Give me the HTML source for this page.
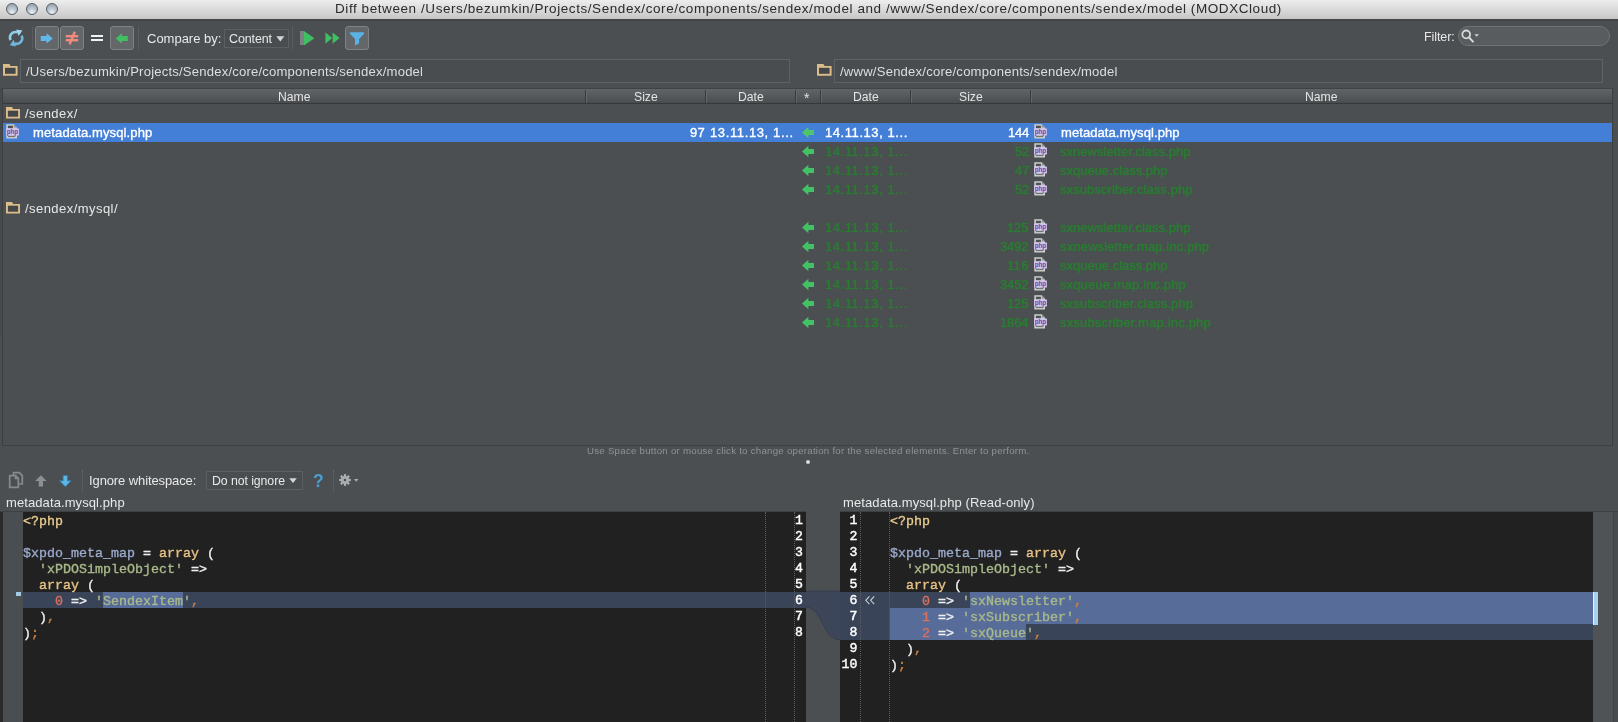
<!DOCTYPE html>
<html>
<head>
<meta charset="utf-8">
<title>Diff</title>
<style>
*{box-sizing:border-box;margin:0;padding:0}
html,body{width:1618px;height:722px;overflow:hidden;background:#4b4f51}
body{position:relative;font-family:"Liberation Sans",sans-serif;font-size:13px;color:#e4e4e4}
.abs{position:absolute}
.t{white-space:pre;line-height:20px;height:20px;will-change:transform}
#title{left:0;top:0;width:1618px;height:19px;background:linear-gradient(#ededed,#dcdcdc 45%,#c6c6c6);}
.tl{top:3px;width:12px;height:12px;border-radius:50%;background:radial-gradient(circle at 50% 85%,#eef3f7 0%,#c3cdd6 35%,#a3afba 70%,#939faa 100%);border:1.3px solid #596067}
.tbtn{width:24px;height:24px;background:#63676a;border:1px solid #7f8385;border-radius:3px}
.sepv{width:0;border-left:1px dotted #64686a}
.combo{border:1px solid #5b5f61;background:#494d4f}
.field{top:59px;height:24px;border:1px solid #5e6264;background:#494d4f}
.cs{top:90px;width:2px;height:13px;border-left:1px solid #383b3d;border-right:1px solid #64686a}
.mono{font-family:"Liberation Mono",monospace;font-size:13.333px;white-space:pre;line-height:16px;height:16px;font-weight:normal;-webkit-text-stroke-width:0.35px;will-change:transform}
svg{position:absolute;overflow:visible}
</style>
</head>
<body>

<div id="title" class="abs"></div>
<div class="abs" style="left:0;top:19px;width:1618px;height:2px;background:#414547"></div>
<div class="abs tl" style="left:6px"></div>
<div class="abs tl" style="left:26px"></div>
<div class="abs tl" style="left:46px"></div>
<div class="abs t" style="left:334.60px;top:-0.98px;font-size:13.5px;color:#2b2b2b;letter-spacing:0.573px;font-weight:normal;">Diff between /Users/bezumkin/Projects/Sendex/core/components/sendex/model and /www/Sendex/core/components/sendex/model (MODXCloud)</div>
<svg style="left:8px;top:30px" width="16" height="16" viewBox="0 0 16 16">
<path d="M2.6 10.2 A5.6 5.6 0 0 1 9.4 2.3" fill="none" stroke="#8ecbe9" stroke-width="2.5"/>
<path d="M13.6 5.6 A5.6 5.6 0 0 1 6.8 13.5" fill="none" stroke="#6fb7df" stroke-width="2.5"/>
<path d="M8.2 -0.6 L14.4 0.6 L10.6 6 Z" fill="#a6d6ee"/>
<path d="M8 16.4 L1.8 15.2 L5.6 9.8 Z" fill="#6fb7df"/>
</svg>
<div class="abs sepv" style="left:32px;top:27px;height:23px"></div>
<div class="abs tbtn" style="left:35px;top:26px"></div>
<div class="abs tbtn" style="left:60px;top:26px"></div>
<div class="abs tbtn" style="left:110px;top:26px"></div>
<div class="abs sepv" style="left:138px;top:27px;height:23px"></div>
<svg style="left:40px;top:33px" width="13" height="11" viewBox="0 0 13 11"><path d="M0.7 2.9 H6.6 V0.3 L12.8 5.4 L6.6 10.5 V7.9 H0.7 Z" fill="#60b7ea"/></svg>
<svg style="left:65px;top:31px" width="14" height="14" viewBox="0 0 14 14"><rect x="0.8" y="4" width="12.4" height="2.4" fill="#f28b7d"/><rect x="0.8" y="8" width="12.4" height="2.4" fill="#f28b7d"/><path d="M9.8 0.8 L4.6 13.4" stroke="#f28b7d" stroke-width="2.4" fill="none"/></svg>
<div class="abs" style="left:91px;top:35px;width:12px;height:2px;background:#f2f2f2"></div>
<div class="abs" style="left:91px;top:39px;width:12px;height:2px;background:#f2f2f2"></div>
<svg style="left:115px;top:32.5px" width="13" height="11" viewBox="0 0 13 11"><path d="M12.8 2.9 H6.9 V0.3 L0.6 5.4 L6.9 10.5 V7.9 H12.8 Z" fill="#3fbf62"/></svg>
<div class="abs t" style="left:146.70px;top:28.90px;font-size:13px;color:#e8e8e8;letter-spacing:-0.012px;font-weight:normal;">Compare by:</div>
<div class="abs combo" style="left:224px;top:29px;width:65px;height:19px"></div>
<div class="abs t" style="left:228.70px;top:29.07px;font-size:12.5px;color:#e8e8e8;letter-spacing:-0.130px;font-weight:normal;">Content</div>
<svg style="left:275.5px;top:36px" width="9" height="6" viewBox="0 0 9 6"><path d="M0.3 0.3 H8.3 L4.3 5.4 Z" fill="#d6d6d6"/></svg>
<div class="abs sepv" style="left:292px;top:27px;height:23px"></div>
<div class="abs" style="left:300px;top:31px;width:4px;height:14px;background:#7c8082"></div>
<svg style="left:304px;top:31px" width="11" height="15" viewBox="0 0 11 15"><path d="M0 0 L10.4 7.2 L0 14.4 Z" fill="#3fbf62"/></svg>
<svg style="left:325px;top:32px" width="15" height="12" viewBox="0 0 15 12"><path d="M0.4 0.5 L7.2 6.1 L0.4 11.7 Z M7.6 0.5 L14.6 6.1 L7.6 11.7 Z" fill="#3fbf62"/></svg>
<div class="abs tbtn" style="left:345px;top:26px"></div>
<svg style="left:350px;top:32px" width="14" height="14" viewBox="0 0 14 14"><path d="M0 0.2 H14 V1.8 L9.1 7 V11.2 L5 13.6 V7 L0 1.8 Z" fill="#5ab3e6"/></svg>
<div class="abs t" style="left:1423.50px;top:27.17px;font-size:12.5px;color:#e8e8e8;letter-spacing:-0.075px;font-weight:normal;">Filter:</div>
<div class="abs" style="left:1458px;top:26px;width:152px;height:20px;border-radius:10px;border:1px solid #6f7375;background:#585c5e"></div>
<svg style="left:1461px;top:29px" width="19" height="14" viewBox="0 0 19 14"><circle cx="5.2" cy="5.4" r="3.9" fill="none" stroke="#d9d9d9" stroke-width="1.8"/><path d="M7.9 8.3 L12 12.6" stroke="#d9d9d9" stroke-width="2" stroke-linecap="round"/><path d="M13.4 5.2 H18 L15.7 7.8 Z" fill="#d0d0d0"/></svg>
<svg style="left:2.7px;top:64.3px" width="15" height="12" viewBox="0 0 15 12"><path d="M0 0 H6.4 L7.6 2 H14.6 V11.8 H0 Z" fill="#dcbd8a"/><rect x="2" y="3.8" width="10.6" height="6" fill="#43474a"/></svg>
<div class="abs field" style="left:19.5px;width:770px"></div>
<div class="abs t" style="left:26.00px;top:61.76px;font-size:13.1px;color:#dedede;letter-spacing:0.191px;font-weight:normal;">/Users/bezumkin/Projects/Sendex/core/components/sendex/model</div>
<svg style="left:816.5px;top:64.3px" width="15" height="12" viewBox="0 0 15 12"><path d="M0 0 H6.4 L7.6 2 H14.6 V11.8 H0 Z" fill="#dcbd8a"/><rect x="2" y="3.8" width="10.6" height="6" fill="#43474a"/></svg>
<div class="abs field" style="left:833.5px;width:769px"></div>
<div class="abs t" style="left:839.70px;top:61.76px;font-size:13.1px;color:#dedede;letter-spacing:0.210px;font-weight:normal;">/www/Sendex/core/components/sendex/model</div>
<div class="abs" style="left:0;top:88px;width:2px;height:247px;background:#464a4c"></div>
<div class="abs" style="left:2px;top:88px;width:1px;height:358px;background:#3c3f41"></div>
<div class="abs" style="left:1612px;top:88px;width:1px;height:358px;background:#3c3f41"></div>
<div class="abs" style="left:3px;top:88px;width:1609px;height:16px;background:linear-gradient(#606466,#55595b 50%,#494d4f);border-top:1px solid #404345;border-bottom:1px solid #36393b"></div>
<div class="abs cs" style="left:584.5px"></div>
<div class="abs cs" style="left:704.5px"></div>
<div class="abs cs" style="left:795.0px"></div>
<div class="abs cs" style="left:819.5px"></div>
<div class="abs cs" style="left:909.5px"></div>
<div class="abs cs" style="left:1029.5px"></div>
<div class="abs t" style="left:277.74px;top:86.97px;font-size:12.2px;color:#e4e4e4;letter-spacing:0.000px;font-weight:normal;">Name</div>
<div class="abs t" style="left:634.14px;top:86.97px;font-size:12.2px;color:#e4e4e4;letter-spacing:0.000px;font-weight:normal;">Size</div>
<div class="abs t" style="left:738.12px;top:86.97px;font-size:12.2px;color:#e4e4e4;letter-spacing:0.000px;font-weight:normal;">Date</div>
<div class="abs t" style="left:853.12px;top:86.97px;font-size:12.2px;color:#e4e4e4;letter-spacing:0.000px;font-weight:normal;">Date</div>
<div class="abs t" style="left:959.14px;top:86.97px;font-size:12.2px;color:#e4e4e4;letter-spacing:0.000px;font-weight:normal;">Size</div>
<div class="abs t" style="left:1305.24px;top:86.97px;font-size:12.2px;color:#e4e4e4;letter-spacing:0.000px;font-weight:normal;">Name</div>
<div class="abs t" style="left:804.30px;top:88.35px;font-size:14px;color:#e2e2e2;letter-spacing:0.000px;font-weight:normal;">*</div>
<div class="abs" style="left:3px;top:123px;width:1609px;height:19px;background:#437fd6"></div>
<svg style="left:6px;top:107px" width="14" height="12" viewBox="0 0 14 12"><path d="M0 0 H6 L7.2 2 H14 V11.6 H0 Z" fill="#dcbd8a"/><rect x="1.9" y="3.7" width="10.2" height="6" fill="#43474a"/></svg>
<div class="abs t" style="left:25.00px;top:103.60px;font-size:13px;color:#e8e8e8;letter-spacing:0.449px;font-weight:normal;">/sendex/</div>
<svg style="left:6px;top:202px" width="14" height="12" viewBox="0 0 14 12"><path d="M0 0 H6 L7.2 2 H14 V11.6 H0 Z" fill="#dcbd8a"/><rect x="1.9" y="3.7" width="10.2" height="6" fill="#43474a"/></svg>
<div class="abs t" style="left:25.00px;top:198.60px;font-size:13px;color:#e8e8e8;letter-spacing:0.446px;font-weight:normal;">/sendex/mysql/</div>
<svg style="left:6px;top:124px" width="13" height="15" viewBox="0 0 13 15"><path d="M0.3 0.2 H7.8 L11 3.4 V14.6 H0.3 Z" fill="#cfcfcf"/><rect x="1.9" y="1.7" width="5" height="2.6" fill="#4e5254"/><path d="M7.8 0.2 L11 3.4 H7.8 Z" fill="#8f9294"/><rect x="1.9" y="11.6" width="7.4" height="1.5" fill="#707476"/><rect x="0" y="4.5" width="12.9" height="7" fill="#d3c6ee"/><text x="6.45" y="10" font-family="Liberation Sans" font-size="7.6" font-weight="bold" fill="#6b47a8" text-anchor="middle" textLength="11.6" lengthAdjust="spacingAndGlyphs">php</text></svg>
<div class="abs t" style="left:32.70px;top:122.60px;font-size:13px;color:#ffffff;letter-spacing:0.131px;font-weight:normal;-webkit-text-stroke:0.35px #fff;">metadata.mysql.php</div>
<div class="abs t" style="left:689.70px;top:122.60px;font-size:13px;color:#ffffff;letter-spacing:0.331px;font-weight:normal;-webkit-text-stroke:0.35px #fff;">97</div>
<div class="abs t" style="left:710.00px;top:122.60px;font-size:13px;color:#ffffff;letter-spacing:0.620px;font-weight:normal;-webkit-text-stroke:0.35px #fff;">13.11.13, 1...</div>
<svg style="left:802.1px;top:126.5px" width="12" height="11" viewBox="0 0 12 11"><path d="M12 2.9 H6.4 V-0.3 L0 5.5 L6.4 11.3 V8.1 H12 Z" fill="#4cc56c"/></svg>
<div class="abs t" style="left:824.90px;top:122.60px;font-size:13px;color:#ffffff;letter-spacing:0.566px;font-weight:normal;-webkit-text-stroke:0.35px #fff;">14.11.13, 1...</div>
<div class="abs t" style="left:1007.60px;top:122.60px;font-size:13px;color:#ffffff;letter-spacing:-0.252px;font-weight:normal;-webkit-text-stroke:0.35px #fff;">144</div>
<svg style="left:1034px;top:124px" width="13" height="15" viewBox="0 0 13 15"><path d="M0.3 0.2 H7.8 L11 3.4 V14.6 H0.3 Z" fill="#cfcfcf"/><rect x="1.9" y="1.7" width="5" height="2.6" fill="#4e5254"/><path d="M7.8 0.2 L11 3.4 H7.8 Z" fill="#8f9294"/><rect x="1.9" y="11.6" width="7.4" height="1.5" fill="#707476"/><rect x="0" y="4.5" width="12.9" height="7" fill="#d3c6ee"/><text x="6.45" y="10" font-family="Liberation Sans" font-size="7.6" font-weight="bold" fill="#6b47a8" text-anchor="middle" textLength="11.6" lengthAdjust="spacingAndGlyphs">php</text></svg>
<div class="abs t" style="left:1060.70px;top:122.60px;font-size:13px;color:#ffffff;letter-spacing:0.084px;font-weight:normal;-webkit-text-stroke:0.35px #fff;">metadata.mysql.php</div>
<svg style="left:802.1px;top:145.5px" width="12" height="11" viewBox="0 0 12 11"><path d="M12 2.9 H6.4 V-0.3 L0 5.5 L6.4 11.3 V8.1 H12 Z" fill="#43c165"/></svg>
<div class="abs t" style="left:824.90px;top:141.60px;font-size:13px;color:#2b7c33;letter-spacing:0.566px;font-weight:normal;text-shadow:0 0 1.2px #2a7d33;-webkit-text-stroke:0.2px #2a7d33;">14.11.13, 1...</div>
<div class="abs t" style="left:1014.50px;top:141.60px;font-size:13px;color:#2b7c33;letter-spacing:-0.169px;font-weight:normal;text-shadow:0 0 1.2px #2a7d33;-webkit-text-stroke:0.2px #2a7d33;">52</div>
<svg style="left:1034px;top:143px" width="13" height="15" viewBox="0 0 13 15"><path d="M0.3 0.2 H7.8 L11 3.4 V14.6 H0.3 Z" fill="#cfcfcf"/><rect x="1.9" y="1.7" width="5" height="2.6" fill="#4e5254"/><path d="M7.8 0.2 L11 3.4 H7.8 Z" fill="#8f9294"/><rect x="1.9" y="11.6" width="7.4" height="1.5" fill="#707476"/><rect x="0" y="4.5" width="12.9" height="7" fill="#d3c6ee"/><text x="6.45" y="10" font-family="Liberation Sans" font-size="7.6" font-weight="bold" fill="#6b47a8" text-anchor="middle" textLength="11.6" lengthAdjust="spacingAndGlyphs">php</text></svg>
<div class="abs t" style="left:1059.50px;top:141.60px;font-size:13px;color:#2b7c33;letter-spacing:0.020px;font-weight:normal;text-shadow:0 0 1.2px #2a7d33;-webkit-text-stroke:0.2px #2a7d33;">sxnewsletter.class.php</div>
<svg style="left:802.1px;top:164.5px" width="12" height="11" viewBox="0 0 12 11"><path d="M12 2.9 H6.4 V-0.3 L0 5.5 L6.4 11.3 V8.1 H12 Z" fill="#43c165"/></svg>
<div class="abs t" style="left:824.90px;top:160.60px;font-size:13px;color:#2b7c33;letter-spacing:0.566px;font-weight:normal;text-shadow:0 0 1.2px #2a7d33;-webkit-text-stroke:0.2px #2a7d33;">14.11.13, 1...</div>
<div class="abs t" style="left:1014.50px;top:160.60px;font-size:13px;color:#2b7c33;letter-spacing:-0.169px;font-weight:normal;text-shadow:0 0 1.2px #2a7d33;-webkit-text-stroke:0.2px #2a7d33;">47</div>
<svg style="left:1034px;top:162px" width="13" height="15" viewBox="0 0 13 15"><path d="M0.3 0.2 H7.8 L11 3.4 V14.6 H0.3 Z" fill="#cfcfcf"/><rect x="1.9" y="1.7" width="5" height="2.6" fill="#4e5254"/><path d="M7.8 0.2 L11 3.4 H7.8 Z" fill="#8f9294"/><rect x="1.9" y="11.6" width="7.4" height="1.5" fill="#707476"/><rect x="0" y="4.5" width="12.9" height="7" fill="#d3c6ee"/><text x="6.45" y="10" font-family="Liberation Sans" font-size="7.6" font-weight="bold" fill="#6b47a8" text-anchor="middle" textLength="11.6" lengthAdjust="spacingAndGlyphs">php</text></svg>
<div class="abs t" style="left:1059.50px;top:160.60px;font-size:13px;color:#2b7c33;letter-spacing:-0.012px;font-weight:normal;text-shadow:0 0 1.2px #2a7d33;-webkit-text-stroke:0.2px #2a7d33;">sxqueue.class.php</div>
<svg style="left:802.1px;top:183.5px" width="12" height="11" viewBox="0 0 12 11"><path d="M12 2.9 H6.4 V-0.3 L0 5.5 L6.4 11.3 V8.1 H12 Z" fill="#43c165"/></svg>
<div class="abs t" style="left:824.90px;top:179.60px;font-size:13px;color:#2b7c33;letter-spacing:0.566px;font-weight:normal;text-shadow:0 0 1.2px #2a7d33;-webkit-text-stroke:0.2px #2a7d33;">14.11.13, 1...</div>
<div class="abs t" style="left:1014.50px;top:179.60px;font-size:13px;color:#2b7c33;letter-spacing:-0.169px;font-weight:normal;text-shadow:0 0 1.2px #2a7d33;-webkit-text-stroke:0.2px #2a7d33;">52</div>
<svg style="left:1034px;top:181px" width="13" height="15" viewBox="0 0 13 15"><path d="M0.3 0.2 H7.8 L11 3.4 V14.6 H0.3 Z" fill="#cfcfcf"/><rect x="1.9" y="1.7" width="5" height="2.6" fill="#4e5254"/><path d="M7.8 0.2 L11 3.4 H7.8 Z" fill="#8f9294"/><rect x="1.9" y="11.6" width="7.4" height="1.5" fill="#707476"/><rect x="0" y="4.5" width="12.9" height="7" fill="#d3c6ee"/><text x="6.45" y="10" font-family="Liberation Sans" font-size="7.6" font-weight="bold" fill="#6b47a8" text-anchor="middle" textLength="11.6" lengthAdjust="spacingAndGlyphs">php</text></svg>
<div class="abs t" style="left:1059.50px;top:179.60px;font-size:13px;color:#2b7c33;letter-spacing:0.082px;font-weight:normal;text-shadow:0 0 1.2px #2a7d33;-webkit-text-stroke:0.2px #2a7d33;">sxsubscriber.class.php</div>
<svg style="left:802.1px;top:221.5px" width="12" height="11" viewBox="0 0 12 11"><path d="M12 2.9 H6.4 V-0.3 L0 5.5 L6.4 11.3 V8.1 H12 Z" fill="#43c165"/></svg>
<div class="abs t" style="left:824.90px;top:217.60px;font-size:13px;color:#2b7c33;letter-spacing:0.566px;font-weight:normal;text-shadow:0 0 1.2px #2a7d33;-webkit-text-stroke:0.2px #2a7d33;">14.11.13, 1...</div>
<div class="abs t" style="left:1007.35px;top:217.60px;font-size:13px;color:#2b7c33;letter-spacing:-0.127px;font-weight:normal;text-shadow:0 0 1.2px #2a7d33;-webkit-text-stroke:0.2px #2a7d33;">125</div>
<svg style="left:1034px;top:219px" width="13" height="15" viewBox="0 0 13 15"><path d="M0.3 0.2 H7.8 L11 3.4 V14.6 H0.3 Z" fill="#cfcfcf"/><rect x="1.9" y="1.7" width="5" height="2.6" fill="#4e5254"/><path d="M7.8 0.2 L11 3.4 H7.8 Z" fill="#8f9294"/><rect x="1.9" y="11.6" width="7.4" height="1.5" fill="#707476"/><rect x="0" y="4.5" width="12.9" height="7" fill="#d3c6ee"/><text x="6.45" y="10" font-family="Liberation Sans" font-size="7.6" font-weight="bold" fill="#6b47a8" text-anchor="middle" textLength="11.6" lengthAdjust="spacingAndGlyphs">php</text></svg>
<div class="abs t" style="left:1059.50px;top:217.60px;font-size:13px;color:#2b7c33;letter-spacing:0.020px;font-weight:normal;text-shadow:0 0 1.2px #2a7d33;-webkit-text-stroke:0.2px #2a7d33;">sxnewsletter.class.php</div>
<svg style="left:802.1px;top:240.5px" width="12" height="11" viewBox="0 0 12 11"><path d="M12 2.9 H6.4 V-0.3 L0 5.5 L6.4 11.3 V8.1 H12 Z" fill="#43c165"/></svg>
<div class="abs t" style="left:824.90px;top:236.60px;font-size:13px;color:#2b7c33;letter-spacing:0.566px;font-weight:normal;text-shadow:0 0 1.2px #2a7d33;-webkit-text-stroke:0.2px #2a7d33;">14.11.13, 1...</div>
<div class="abs t" style="left:1000.20px;top:236.60px;font-size:13px;color:#2b7c33;letter-spacing:-0.107px;font-weight:normal;text-shadow:0 0 1.2px #2a7d33;-webkit-text-stroke:0.2px #2a7d33;">3492</div>
<svg style="left:1034px;top:238px" width="13" height="15" viewBox="0 0 13 15"><path d="M0.3 0.2 H7.8 L11 3.4 V14.6 H0.3 Z" fill="#cfcfcf"/><rect x="1.9" y="1.7" width="5" height="2.6" fill="#4e5254"/><path d="M7.8 0.2 L11 3.4 H7.8 Z" fill="#8f9294"/><rect x="1.9" y="11.6" width="7.4" height="1.5" fill="#707476"/><rect x="0" y="4.5" width="12.9" height="7" fill="#d3c6ee"/><text x="6.45" y="10" font-family="Liberation Sans" font-size="7.6" font-weight="bold" fill="#6b47a8" text-anchor="middle" textLength="11.6" lengthAdjust="spacingAndGlyphs">php</text></svg>
<div class="abs t" style="left:1059.50px;top:236.60px;font-size:13px;color:#2b7c33;letter-spacing:0.136px;font-weight:normal;text-shadow:0 0 1.2px #2a7d33;-webkit-text-stroke:0.2px #2a7d33;">sxnewsletter.map.inc.php</div>
<svg style="left:802.1px;top:259.5px" width="12" height="11" viewBox="0 0 12 11"><path d="M12 2.9 H6.4 V-0.3 L0 5.5 L6.4 11.3 V8.1 H12 Z" fill="#43c165"/></svg>
<div class="abs t" style="left:824.90px;top:255.60px;font-size:13px;color:#2b7c33;letter-spacing:0.566px;font-weight:normal;text-shadow:0 0 1.2px #2a7d33;-webkit-text-stroke:0.2px #2a7d33;">14.11.13, 1...</div>
<div class="abs t" style="left:1007.35px;top:255.60px;font-size:13px;color:#2b7c33;letter-spacing:0.358px;font-weight:normal;text-shadow:0 0 1.2px #2a7d33;-webkit-text-stroke:0.2px #2a7d33;">116</div>
<svg style="left:1034px;top:257px" width="13" height="15" viewBox="0 0 13 15"><path d="M0.3 0.2 H7.8 L11 3.4 V14.6 H0.3 Z" fill="#cfcfcf"/><rect x="1.9" y="1.7" width="5" height="2.6" fill="#4e5254"/><path d="M7.8 0.2 L11 3.4 H7.8 Z" fill="#8f9294"/><rect x="1.9" y="11.6" width="7.4" height="1.5" fill="#707476"/><rect x="0" y="4.5" width="12.9" height="7" fill="#d3c6ee"/><text x="6.45" y="10" font-family="Liberation Sans" font-size="7.6" font-weight="bold" fill="#6b47a8" text-anchor="middle" textLength="11.6" lengthAdjust="spacingAndGlyphs">php</text></svg>
<div class="abs t" style="left:1059.50px;top:255.60px;font-size:13px;color:#2b7c33;letter-spacing:-0.012px;font-weight:normal;text-shadow:0 0 1.2px #2a7d33;-webkit-text-stroke:0.2px #2a7d33;">sxqueue.class.php</div>
<svg style="left:802.1px;top:278.5px" width="12" height="11" viewBox="0 0 12 11"><path d="M12 2.9 H6.4 V-0.3 L0 5.5 L6.4 11.3 V8.1 H12 Z" fill="#43c165"/></svg>
<div class="abs t" style="left:824.90px;top:274.60px;font-size:13px;color:#2b7c33;letter-spacing:0.566px;font-weight:normal;text-shadow:0 0 1.2px #2a7d33;-webkit-text-stroke:0.2px #2a7d33;">14.11.13, 1...</div>
<div class="abs t" style="left:1000.20px;top:274.60px;font-size:13px;color:#2b7c33;letter-spacing:-0.107px;font-weight:normal;text-shadow:0 0 1.2px #2a7d33;-webkit-text-stroke:0.2px #2a7d33;">3452</div>
<svg style="left:1034px;top:276px" width="13" height="15" viewBox="0 0 13 15"><path d="M0.3 0.2 H7.8 L11 3.4 V14.6 H0.3 Z" fill="#cfcfcf"/><rect x="1.9" y="1.7" width="5" height="2.6" fill="#4e5254"/><path d="M7.8 0.2 L11 3.4 H7.8 Z" fill="#8f9294"/><rect x="1.9" y="11.6" width="7.4" height="1.5" fill="#707476"/><rect x="0" y="4.5" width="12.9" height="7" fill="#d3c6ee"/><text x="6.45" y="10" font-family="Liberation Sans" font-size="7.6" font-weight="bold" fill="#6b47a8" text-anchor="middle" textLength="11.6" lengthAdjust="spacingAndGlyphs">php</text></svg>
<div class="abs t" style="left:1059.50px;top:274.60px;font-size:13px;color:#2b7c33;letter-spacing:0.123px;font-weight:normal;text-shadow:0 0 1.2px #2a7d33;-webkit-text-stroke:0.2px #2a7d33;">sxqueue.map.inc.php</div>
<svg style="left:802.1px;top:297.5px" width="12" height="11" viewBox="0 0 12 11"><path d="M12 2.9 H6.4 V-0.3 L0 5.5 L6.4 11.3 V8.1 H12 Z" fill="#43c165"/></svg>
<div class="abs t" style="left:824.90px;top:293.60px;font-size:13px;color:#2b7c33;letter-spacing:0.566px;font-weight:normal;text-shadow:0 0 1.2px #2a7d33;-webkit-text-stroke:0.2px #2a7d33;">14.11.13, 1...</div>
<div class="abs t" style="left:1007.35px;top:293.60px;font-size:13px;color:#2b7c33;letter-spacing:-0.127px;font-weight:normal;text-shadow:0 0 1.2px #2a7d33;-webkit-text-stroke:0.2px #2a7d33;">125</div>
<svg style="left:1034px;top:295px" width="13" height="15" viewBox="0 0 13 15"><path d="M0.3 0.2 H7.8 L11 3.4 V14.6 H0.3 Z" fill="#cfcfcf"/><rect x="1.9" y="1.7" width="5" height="2.6" fill="#4e5254"/><path d="M7.8 0.2 L11 3.4 H7.8 Z" fill="#8f9294"/><rect x="1.9" y="11.6" width="7.4" height="1.5" fill="#707476"/><rect x="0" y="4.5" width="12.9" height="7" fill="#d3c6ee"/><text x="6.45" y="10" font-family="Liberation Sans" font-size="7.6" font-weight="bold" fill="#6b47a8" text-anchor="middle" textLength="11.6" lengthAdjust="spacingAndGlyphs">php</text></svg>
<div class="abs t" style="left:1059.50px;top:293.60px;font-size:13px;color:#2b7c33;letter-spacing:0.101px;font-weight:normal;text-shadow:0 0 1.2px #2a7d33;-webkit-text-stroke:0.2px #2a7d33;">sxsubscriber.class.php</div>
<svg style="left:802.1px;top:316.5px" width="12" height="11" viewBox="0 0 12 11"><path d="M12 2.9 H6.4 V-0.3 L0 5.5 L6.4 11.3 V8.1 H12 Z" fill="#43c165"/></svg>
<div class="abs t" style="left:824.90px;top:312.60px;font-size:13px;color:#2b7c33;letter-spacing:0.566px;font-weight:normal;text-shadow:0 0 1.2px #2a7d33;-webkit-text-stroke:0.2px #2a7d33;">14.11.13, 1...</div>
<div class="abs t" style="left:1000.20px;top:312.60px;font-size:13px;color:#2b7c33;letter-spacing:-0.107px;font-weight:normal;text-shadow:0 0 1.2px #2a7d33;-webkit-text-stroke:0.2px #2a7d33;">1864</div>
<svg style="left:1034px;top:314px" width="13" height="15" viewBox="0 0 13 15"><path d="M0.3 0.2 H7.8 L11 3.4 V14.6 H0.3 Z" fill="#cfcfcf"/><rect x="1.9" y="1.7" width="5" height="2.6" fill="#4e5254"/><path d="M7.8 0.2 L11 3.4 H7.8 Z" fill="#8f9294"/><rect x="1.9" y="11.6" width="7.4" height="1.5" fill="#707476"/><rect x="0" y="4.5" width="12.9" height="7" fill="#d3c6ee"/><text x="6.45" y="10" font-family="Liberation Sans" font-size="7.6" font-weight="bold" fill="#6b47a8" text-anchor="middle" textLength="11.6" lengthAdjust="spacingAndGlyphs">php</text></svg>
<div class="abs t" style="left:1059.50px;top:312.60px;font-size:13px;color:#2b7c33;letter-spacing:0.174px;font-weight:normal;text-shadow:0 0 1.2px #2a7d33;-webkit-text-stroke:0.2px #2a7d33;">sxsubscriber.map.inc.php</div>
<div class="abs" style="left:3px;top:445px;width:1610px;height:1px;background:#3e4143"></div>
<div class="abs t" style="left:586.90px;top:441.14px;font-size:9.7px;color:#8f9395;letter-spacing:0.246px;font-weight:normal;">Use Space button or mouse click to change operation for the selected elements. Enter to perform.</div>
<div class="abs" style="left:806px;top:459.7px;width:4px;height:4px;border-radius:2px;background:#dadada"></div>
<svg style="left:9px;top:472px" width="14" height="16" viewBox="0 0 14 16">
<path d="M4.6 3 V0.7 H10.4 L13.3 3.6 V12 H9.4" fill="none" stroke="#878b8d" stroke-width="1.7"/>
<path d="M0.7 3.6 H6.6 L9.3 6.4 V15.3 H0.7 Z" fill="none" stroke="#878b8d" stroke-width="1.7"/>
<path d="M6.4 3.6 V6.6 H9.3" fill="none" stroke="#878b8d" stroke-width="1.3"/>
</svg>
<svg style="left:35px;top:474.5px" width="12" height="12" viewBox="0 0 12 12"><path d="M5.9 0.2 L11.6 6 H8 V11.4 H3.8 V6 H0.2 Z" fill="#8d9193"/></svg>
<svg style="left:59px;top:474.5px" width="13" height="12" viewBox="0 0 13 12"><path d="M6.3 11.7 L12.2 5.8 H8.5 V0.4 H4.1 V5.8 H0.4 Z" fill="#5ab6e6" stroke="#2f78a6" stroke-width="0.7"/></svg>
<div class="abs sepv" style="left:82px;top:470px;height:22px"></div>
<div class="abs t" style="left:89.20px;top:470.60px;font-size:13px;color:#e8e8e8;letter-spacing:-0.107px;font-weight:normal;">Ignore whitespace:</div>
<div class="abs combo" style="left:206px;top:471px;width:97px;height:19px"></div>
<div class="abs t" style="left:211.60px;top:471.34px;font-size:12.3px;color:#e8e8e8;letter-spacing:-0.070px;font-weight:normal;">Do not ignore</div>
<svg style="left:289.3px;top:478px" width="8" height="6" viewBox="0 0 8 6"><path d="M0.2 0.2 H7.8 L4 5 Z" fill="#d6d6d6"/></svg>
<div class="abs t" style="left:312.80px;top:471.24px;font-size:17.5px;color:#4b9dd3;letter-spacing:0.000px;font-weight:bold;">?</div>
<div class="abs sepv" style="left:333px;top:470px;height:22px"></div>
<svg style="left:339px;top:474px" width="12" height="12" viewBox="-6 -6 12 12"><rect x="-1.1" y="-5.9" width="2.2" height="3" fill="#a9adaf" transform="rotate(0)"/><rect x="-1.1" y="-5.9" width="2.2" height="3" fill="#a9adaf" transform="rotate(45)"/><rect x="-1.1" y="-5.9" width="2.2" height="3" fill="#a9adaf" transform="rotate(90)"/><rect x="-1.1" y="-5.9" width="2.2" height="3" fill="#a9adaf" transform="rotate(135)"/><rect x="-1.1" y="-5.9" width="2.2" height="3" fill="#a9adaf" transform="rotate(180)"/><rect x="-1.1" y="-5.9" width="2.2" height="3" fill="#a9adaf" transform="rotate(225)"/><rect x="-1.1" y="-5.9" width="2.2" height="3" fill="#a9adaf" transform="rotate(270)"/><rect x="-1.1" y="-5.9" width="2.2" height="3" fill="#a9adaf" transform="rotate(315)"/><circle r="2.7" fill="none" stroke="#a9adaf" stroke-width="2.8"/></svg>
<svg style="left:353.5px;top:478.6px" width="5" height="3" viewBox="0 0 5 3"><path d="M0 0 H4.4 L2.2 2.8 Z" fill="#a9adaf"/></svg>
<div class="abs t" style="left:6.40px;top:493.10px;font-size:13px;color:#e8e8e8;letter-spacing:0.095px;font-weight:normal;">metadata.mysql.php</div>
<div class="abs t" style="left:842.50px;top:493.10px;font-size:13px;color:#e8e8e8;letter-spacing:0.100px;font-weight:normal;">metadata.mysql.php (Read-only)</div>
<div class="abs" style="left:0;top:512px;width:3px;height:210px;background:#2b2b2b"></div>
<div class="abs" style="left:3px;top:512px;width:20px;height:210px;background:#4a4e50"></div>
<div class="abs" style="left:23px;top:512px;width:783px;height:210px;background:#212121"></div>
<div class="abs" style="left:840px;top:512px;width:753px;height:210px;background:#212121"></div>
<div class="abs" style="left:1593px;top:512px;width:20px;height:210px;background:#4f5355"></div>
<div class="abs" style="left:1613px;top:512px;width:5px;height:210px;background:#484c4e;border-left:1px solid #414446"></div>
<div class="abs" style="left:0;top:511px;width:1618px;height:1px;background:#3e4143"></div>
<div class="abs" style="left:806px;top:511px;width:34px;height:1px;background:#4b4f51"></div>
<div class="abs" style="left:23px;top:592px;width:783px;height:16px;background:#3a4458"></div>
<div class="abs" style="left:103px;top:592px;width:80px;height:16px;background:#586c99"></div>
<svg style="left:806px;top:591px" width="34" height="49" viewBox="0 0 34 49"><path d="M0 0 H34 V49 C16 49 17 16.5 0 16.5 Z" fill="#3d4559"/><path d="M0 0.3 H34 M34 48.6 C16 48.6 17 16.2 0 16.2" fill="none" stroke="#343c4f" stroke-width="0.9"/></svg>
<div class="abs" style="left:840px;top:592px;width:753px;height:48px;background:#3a4458"></div>
<div class="abs" style="left:970px;top:592px;width:623px;height:16px;background:#586c99"></div>
<div class="abs" style="left:890px;top:608px;width:703px;height:16px;background:#586c99"></div>
<div class="abs" style="left:890px;top:624px;width:136px;height:16px;background:#586c99"></div>
<div class="abs" style="left:1593px;top:592px;width:5px;height:33px;background:#a9d2f2;border-left:1px solid #e8f2fb"></div>
<div class="abs" style="left:15.5px;top:592px;width:5.5px;height:4px;background:#a4c9e4"></div>
<div class="abs" style="left:765px;top:512px;width:0;height:210px;border-left:1px dotted #5e5e5e"></div>
<div class="abs" style="left:794px;top:512px;width:0;height:210px;border-left:1px dotted #5e5e5e"></div>
<div class="abs" style="left:860px;top:512px;width:0;height:210px;border-left:1px dotted #5e5e5e"></div>
<div class="abs" style="left:889px;top:512px;width:0;height:210px;border-left:1px dotted #5e5e5e"></div>
<div class="abs mono" style="left:23px;top:513.8px"><span style="color:#e8c98e">&lt;?php</span></div>
<div class="abs mono" style="left:23px;top:545.8px"><span style="color:#9aa8c9">$xpdo_meta_map</span><span style="color:#efefef"> = </span><span style="color:#e8c286">array</span><span style="color:#efefef"> (</span></div>
<div class="abs mono" style="left:23px;top:561.8px"><span style="color:#a9b98a">  &#x27;xPDOSimpleObject&#x27;</span><span style="color:#efefef"> =&gt;</span></div>
<div class="abs mono" style="left:23px;top:577.8px"><span style="color:#e8c286">  array</span><span style="color:#efefef"> (</span></div>
<div class="abs mono" style="left:23px;top:593.8px"><span style="color:#d9705f">    0</span><span style="color:#efefef"> =&gt; </span><span style="color:#a9b98a">&#x27;SendexItem&#x27;</span><span style="color:#cc8242">,</span></div>
<div class="abs mono" style="left:23px;top:609.8px"><span style="color:#efefef">  )</span><span style="color:#cc8242">,</span></div>
<div class="abs mono" style="left:23px;top:625.8px"><span style="color:#efefef">)</span><span style="color:#cc8242">;</span></div>
<div class="abs mono" style="left:890px;top:513.8px"><span style="color:#e8c98e">&lt;?php</span></div>
<div class="abs mono" style="left:890px;top:545.8px"><span style="color:#9aa8c9">$xpdo_meta_map</span><span style="color:#efefef"> = </span><span style="color:#e8c286">array</span><span style="color:#efefef"> (</span></div>
<div class="abs mono" style="left:890px;top:561.8px"><span style="color:#a9b98a">  &#x27;xPDOSimpleObject&#x27;</span><span style="color:#efefef"> =&gt;</span></div>
<div class="abs mono" style="left:890px;top:577.8px"><span style="color:#e8c286">  array</span><span style="color:#efefef"> (</span></div>
<div class="abs mono" style="left:890px;top:593.8px"><span style="color:#d9705f">    0</span><span style="color:#efefef"> =&gt; </span><span style="color:#a9b98a">&#x27;sxNewsletter&#x27;</span><span style="color:#cc8242">,</span></div>
<div class="abs mono" style="left:890px;top:609.8px"><span style="color:#d9705f">    1</span><span style="color:#efefef"> =&gt; </span><span style="color:#a9b98a">&#x27;sxSubscriber&#x27;</span><span style="color:#cc8242">,</span></div>
<div class="abs mono" style="left:890px;top:625.8px"><span style="color:#d9705f">    2</span><span style="color:#efefef"> =&gt; </span><span style="color:#a9b98a">&#x27;sxQueue&#x27;</span><span style="color:#cc8242">,</span></div>
<div class="abs mono" style="left:890px;top:641.8px"><span style="color:#efefef">  )</span><span style="color:#cc8242">,</span></div>
<div class="abs mono" style="left:890px;top:657.8px"><span style="color:#efefef">)</span><span style="color:#cc8242">;</span></div>
<div class="abs mono" style="left:795.3px;top:513.4px;color:#fff;font-size:13.2px;letter-spacing:0.08px;font-weight:normal;-webkit-text-stroke:0.42px #fff">1</div>
<div class="abs mono" style="left:795.3px;top:529.4px;color:#fff;font-size:13.2px;letter-spacing:0.08px;font-weight:normal;-webkit-text-stroke:0.42px #fff">2</div>
<div class="abs mono" style="left:795.3px;top:545.4px;color:#fff;font-size:13.2px;letter-spacing:0.08px;font-weight:normal;-webkit-text-stroke:0.42px #fff">3</div>
<div class="abs mono" style="left:795.3px;top:561.4px;color:#fff;font-size:13.2px;letter-spacing:0.08px;font-weight:normal;-webkit-text-stroke:0.42px #fff">4</div>
<div class="abs mono" style="left:795.3px;top:577.4px;color:#fff;font-size:13.2px;letter-spacing:0.08px;font-weight:normal;-webkit-text-stroke:0.42px #fff">5</div>
<div class="abs mono" style="left:795.3px;top:593.4px;color:#fff;font-size:13.2px;letter-spacing:0.08px;font-weight:normal;-webkit-text-stroke:0.42px #fff">6</div>
<div class="abs mono" style="left:795.3px;top:609.4px;color:#fff;font-size:13.2px;letter-spacing:0.08px;font-weight:normal;-webkit-text-stroke:0.42px #fff">7</div>
<div class="abs mono" style="left:795.3px;top:625.4px;color:#fff;font-size:13.2px;letter-spacing:0.08px;font-weight:normal;-webkit-text-stroke:0.42px #fff">8</div>
<div class="abs mono" style="left:826px;width:31.6px;text-align:right;top:513.4px;color:#fff;font-size:13.2px;letter-spacing:0.08px;font-weight:normal;-webkit-text-stroke:0.42px #fff">1</div>
<div class="abs mono" style="left:826px;width:31.6px;text-align:right;top:529.4px;color:#fff;font-size:13.2px;letter-spacing:0.08px;font-weight:normal;-webkit-text-stroke:0.42px #fff">2</div>
<div class="abs mono" style="left:826px;width:31.6px;text-align:right;top:545.4px;color:#fff;font-size:13.2px;letter-spacing:0.08px;font-weight:normal;-webkit-text-stroke:0.42px #fff">3</div>
<div class="abs mono" style="left:826px;width:31.6px;text-align:right;top:561.4px;color:#fff;font-size:13.2px;letter-spacing:0.08px;font-weight:normal;-webkit-text-stroke:0.42px #fff">4</div>
<div class="abs mono" style="left:826px;width:31.6px;text-align:right;top:577.4px;color:#fff;font-size:13.2px;letter-spacing:0.08px;font-weight:normal;-webkit-text-stroke:0.42px #fff">5</div>
<div class="abs mono" style="left:826px;width:31.6px;text-align:right;top:593.4px;color:#fff;font-size:13.2px;letter-spacing:0.08px;font-weight:normal;-webkit-text-stroke:0.42px #fff">6</div>
<div class="abs mono" style="left:826px;width:31.6px;text-align:right;top:609.4px;color:#fff;font-size:13.2px;letter-spacing:0.08px;font-weight:normal;-webkit-text-stroke:0.42px #fff">7</div>
<div class="abs mono" style="left:826px;width:31.6px;text-align:right;top:625.4px;color:#fff;font-size:13.2px;letter-spacing:0.08px;font-weight:normal;-webkit-text-stroke:0.42px #fff">8</div>
<div class="abs mono" style="left:826px;width:31.6px;text-align:right;top:641.4px;color:#fff;font-size:13.2px;letter-spacing:0.08px;font-weight:normal;-webkit-text-stroke:0.42px #fff">9</div>
<div class="abs mono" style="left:826px;width:31.6px;text-align:right;top:657.4px;color:#fff;font-size:13.2px;letter-spacing:0.08px;font-weight:normal;-webkit-text-stroke:0.42px #fff">10</div>
<svg style="left:865px;top:596px" width="10" height="9" viewBox="0 0 10 9"><path d="M4.4 0.4 L0.8 4.3 L4.4 8.2 M9.2 0.4 L5.6 4.3 L9.2 8.2" fill="none" stroke="#c9cdd2" stroke-width="1.1"/></svg>
</body>
</html>
